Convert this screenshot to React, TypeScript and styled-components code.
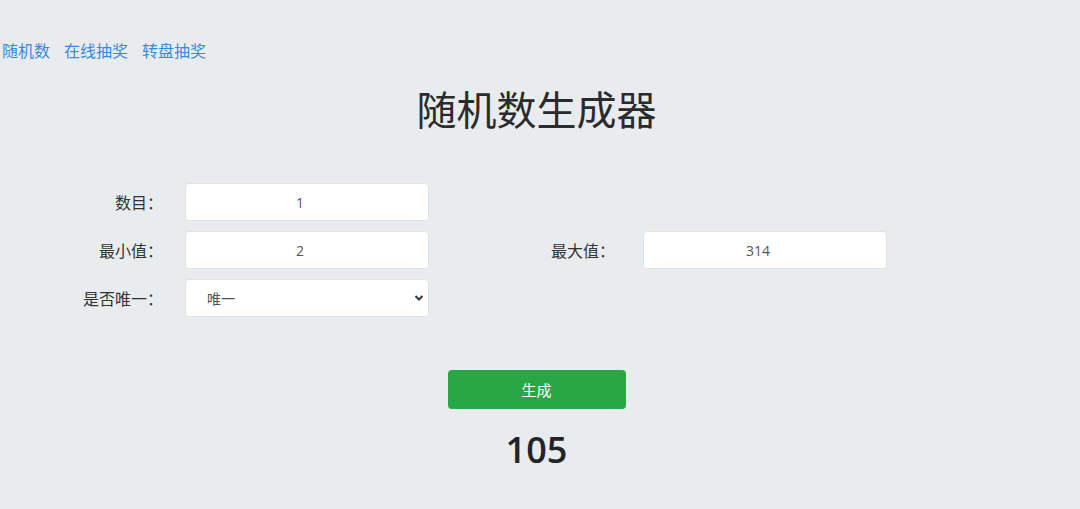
import React, { useState } from "react";
import styled, { createGlobalStyle } from "styled-components";

const GlobalStyle = createGlobalStyle`
	body {
		margin: 0;
		background: #e9ecef;
		font-family: "Open Sans", "Noto Sans CJK SC", sans-serif;
		color: #212529;
	}
`;

const Page = styled.div`
	display: flex;
	flex-direction: column;
	width: 1073px;
	min-height: 509px;
	padding-top: 38px;
	box-sizing: border-box;
`;

const Nav = styled.nav`
	display: flex;
	gap: 14px;
	padding-left: 2px;
	height: 24px;
	align-items: center;
`;

const NavLink = styled.a`
	color: #3889e0;
	font-size: 16px;
	text-decoration: none;
	cursor: pointer;
`;

const Title = styled.h1`
	margin: 24px 0 0;
	text-align: center;
	font-size: 40px;
	font-weight: 400;
	line-height: 48px;
	color: #2b2b2b;
`;

const Form = styled.div`
	display: grid;
	grid-template-columns: 163px 244px 170px 244px;
	grid-auto-rows: 38px;
	column-gap: 22px;
	row-gap: 10px;
	margin-top: 49px;
`;

const Label = styled.label<{ $col?: number }>`
	grid-column: ${(p) => p.$col ?? 1};
	display: flex;
	align-items: center;
	justify-content: flex-end;
	font-size: 16px;
	color: #333;
	padding-right: ${(p) => (p.$col === 3 ? 6 : 0)}px;
`;

const Input = styled.input<{ $col?: number }>`
	grid-column: ${(p) => p.$col ?? 2};
	box-sizing: border-box;
	width: 100%;
	height: 38px;
	padding: 0 14px 0 0;
	border: 1px solid #dfe3e7;
	border-radius: 4px;
	background: #fff;
	text-align: center;
	font-family: "Open Sans", "Noto Sans CJK SC", sans-serif;
	font-size: 14px;
	color: #555;
	outline: none;
`;

const SelectWrap = styled.div`
	grid-column: 2;
	position: relative;
	display: flex;
`;

const Select = styled.select`
	appearance: none;
	box-sizing: border-box;
	width: 100%;
	height: 38px;
	padding: 0 30px 0 21px;
	border: 1px solid #dfe3e7;
	border-radius: 4px;
	background: #fff;
	font-family: "Open Sans", "Noto Sans CJK SC", sans-serif;
	font-size: 14px;
	color: #495057;
	outline: none;
`;

const Chevron = styled.svg`
	position: absolute;
	right: 4px;
	top: 14px;
	pointer-events: none;
`;

const Actions = styled.div`
	display: flex;
	flex-direction: column;
	align-items: center;
	margin-top: 53px;
`;

const Button = styled.button`
	width: 178px;
	height: 39px;
	border: none;
	border-radius: 4px;
	background: #28a745;
	color: #fff;
	font-family: "Open Sans", "Noto Sans CJK SC", sans-serif;
	font-size: 15px;
	cursor: pointer;
`;

const Result = styled.div`
	margin-top: 18px;
	font-size: 36px;
	font-weight: 600;
	line-height: 46px;
	color: #212529;
`;

export default function App() {
	const [count, setCount] = useState("1");
	const [min, setMin] = useState("2");
	const [max, setMax] = useState("314");
	const [unique, setUnique] = useState("1");
	const [result, setResult] = useState("105");

	const generate = () => {
		const n = Math.max(1, parseInt(count) || 1);
		const lo = parseInt(min) || 0;
		const hi = parseInt(max) || 0;
		const out: number[] = [];
		for (let i = 0; i < n && out.length < hi - lo + 1; i++) {
			let v = lo + Math.floor(Math.random() * (hi - lo + 1));
			if (unique === "1") {
				while (out.includes(v)) v = lo + Math.floor(Math.random() * (hi - lo + 1));
			}
			out.push(v);
		}
		setResult(out.join(", "));
	};

	return (
		<>
			<GlobalStyle />
			<Page>
				<Nav>
					<NavLink>随机数</NavLink>
					<NavLink>在线抽奖</NavLink>
					<NavLink>转盘抽奖</NavLink>
				</Nav>
				<Title>随机数生成器</Title>
				<Form>
					<Label>数目：</Label>
					<Input value={count} onChange={(e) => setCount(e.target.value)} />
					<Label>最小值：</Label>
					<Input value={min} onChange={(e) => setMin(e.target.value)} />
					<Label $col={3}>最大值：</Label>
					<Input $col={4} value={max} onChange={(e) => setMax(e.target.value)} />
					<Label>是否唯一：</Label>
					<SelectWrap>
						<Select value={unique} onChange={(e) => setUnique(e.target.value)}>
							<option value="1">唯一</option>
							<option value="0">不唯一</option>
						</Select>
						<Chevron width="12" height="10" viewBox="0 0 12 10">
							<path d="M2.5 3 L6 6.5 L9.5 3" fill="none" stroke="#343a40" strokeWidth="2" />
						</Chevron>
					</SelectWrap>
				</Form>
				<Actions>
					<Button onClick={generate}>生成</Button>
					<Result>{result}</Result>
				</Actions>
			</Page>
		</>
	);
}
